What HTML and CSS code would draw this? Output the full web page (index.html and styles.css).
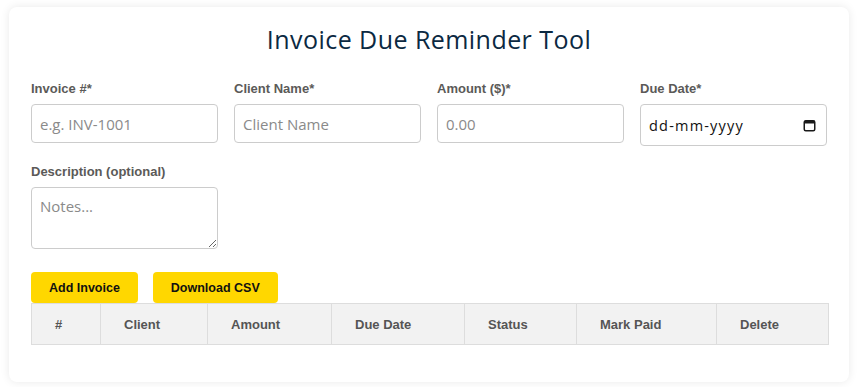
FILE: index.html
```html
<!DOCTYPE html>
<html lang="en">
<head>
<meta charset="utf-8">
<title>Invoice Due Reminder Tool</title>
<link rel="stylesheet" href="styles.css">
</head>
<body>
<main class="card">
  <h1 class="title">Invoice Due Reminder Tool</h1>
  <form class="form-grid">
    <div class="field">
      <label class="label" for="inv">Invoice #*</label>
      <input class="input" id="inv" type="text" placeholder="e.g. INV-1001">
    </div>
    <div class="field">
      <label class="label" for="client">Client Name*</label>
      <input class="input" id="client" type="text" placeholder="Client Name">
    </div>
    <div class="field">
      <label class="label" for="amount">Amount ($)*</label>
      <input class="input" id="amount" type="text" placeholder="0.00">
    </div>
    <div class="field">
      <label class="label" for="due">Due Date*</label>
      <div class="input date-box">
        <input class="date-text" id="due" type="text" placeholder="dd-mm-yyyy">
        <svg class="cal-icon" width="13" height="13" viewBox="0 0 13 13" aria-hidden="true">
          <rect x="1.25" y="1.75" width="10.5" height="10" rx="1.5" fill="none" stroke="#1a1a1a" stroke-width="1.5"/>
          <rect x="1.25" y="1.75" width="10.5" height="2.75" fill="#1a1a1a"/>
        </svg>
      </div>
    </div>
    <div class="field">
      <label class="label" for="desc">Description (optional)</label>
      <textarea class="input textarea" id="desc" placeholder="Notes..."></textarea>
    </div>
  </form>
  <div class="actions">
    <button class="btn" type="button">Add Invoice</button>
    <button class="btn" type="button">Download CSV</button>
  </div>
  <table class="table">
    <colgroup>
      <col class="c-num"><col class="c-client"><col class="c-amount"><col class="c-due"><col class="c-status"><col class="c-paid"><col class="c-del">
    </colgroup>
    <thead>
      <tr>
        <th>#</th><th>Client</th><th>Amount</th><th>Due Date</th><th>Status</th><th>Mark Paid</th><th>Delete</th>
      </tr>
    </thead>
    <tbody></tbody>
  </table>
</main>
</body>
</html>
```

FILE: styles.css
```css
* { box-sizing: border-box; }

html, body {
  background: #ffffff;
}

body {
  margin: 0;
  padding: 7px 13px 5px 9px;
  font-family: "Liberation Sans", Arial, sans-serif;
}

.card {
  background: #ffffff;
  border-radius: 8px;
  box-shadow: 0 0 10px rgba(0, 0, 0, 0.09);
  padding: 20px 22px 37px;
}

.title {
  margin: 0 0 30px;
  text-align: center;
  font-family: "Open Sans", sans-serif;
  font-weight: 500;
  font-size: 25px;
  letter-spacing: 0.45px;
  line-height: 24px;
  color: #0b2942;
}

.form-grid {
  display: grid;
  grid-template-columns: repeat(4, minmax(0, 1fr));
  column-gap: 16px;
  row-gap: 18px;
}

.field {
  display: flex;
  flex-direction: column;
  min-width: 0;
}

.label {
  font-size: 13px;
  font-weight: bold;
  color: #5b5a58;
  line-height: 16px;
  margin-bottom: 7px;
}

.input {
  width: 100%;
  font-family: "Open Sans", sans-serif;
  font-size: 15px;
  height: 39px;
  padding: 8px;
  border: 1px solid #cccccc;
  border-radius: 4px;
  color: #222;
  background: #fff;
  outline: none;
}

.input::placeholder {
  color: #8a8a8a;
}

.date-box {
  display: flex;
  align-items: center;
  height: 42px;
  padding: 0 10px 0 8px;
}

.date-text {
  flex: 1;
  min-width: 0;
  border: none;
  outline: none;
  padding: 0;
  font-family: "Open Sans", sans-serif;
  font-size: 14.5px;
  letter-spacing: 1.2px;
  color: #111;
  background: transparent;
}

.date-text::placeholder {
  color: #111;
}

.cal-icon {
  flex: none;
  display: block;
}

.textarea {
  height: 62px;
  resize: vertical;
}

.actions {
  display: flex;
  gap: 15px;
  margin-top: 23px;
}

.btn {
  font-family: "Liberation Sans", Arial, sans-serif;
  font-size: 12.5px;
  font-weight: bold;
  color: #111;
  background: #ffd700;
  border: none;
  border-radius: 4px;
  height: 31px;
  padding: 0 18px;
}

.table {
  width: 100%;
  border-collapse: collapse;
  table-layout: fixed;
}

.c-num { width: 69px; }
.c-client { width: 107px; }
.c-amount { width: 124px; }
.c-due { width: 133px; }
.c-status { width: 112px; }
.c-paid { width: 140px; }
.c-del { width: 112px; }

.table th {
  background: #f2f2f2;
  border: 1px solid #dddddd;
  height: 41px;
  padding: 0 8px 0 23px;
  font-size: 13px;
  font-weight: bold;
  color: #555555;
  text-align: left;
}
```
